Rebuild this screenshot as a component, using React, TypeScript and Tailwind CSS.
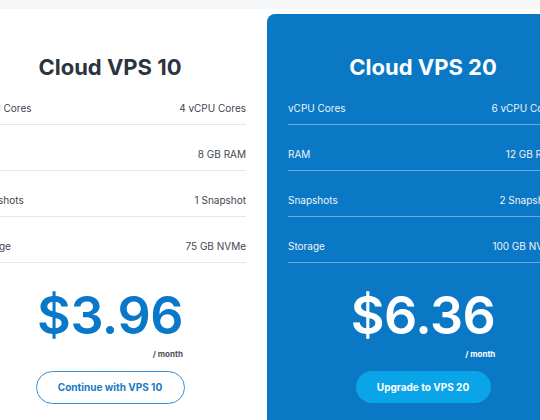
import React from "react";

type Row = { label: string; value: string };

function Card({
  title,
  rows,
  price,
  button,
  featured,
}: {
  title: string;
  rows: Row[];
  price: string;
  button: string;
  featured?: boolean;
}) {
  return (
    <div
      className={
        featured
          ? "w-[312px] shrink-0 mt-[5px] rounded-tl-[8px] bg-[#0a78c4] text-white px-[21px] pt-[39px] pb-[20px]"
          : "w-[312px] shrink-0 bg-white text-[#2f3542] px-[20px] pt-[44px] pb-[20px]"
      }
    >
      <div
        className={
          "text-center text-[22px] leading-[28px] font-bold -mb-[2px] " +
          (featured ? "text-white" : "text-[#2b3440]")
        }
      >
        {title}
      </div>
      <div>
        {rows.map((r) => (
          <div
            key={r.label}
            className={
              "flex justify-between items-center pt-[22px] pb-[8px] text-[10px] leading-[15px] border-b " +
              (featured
                ? "border-[#6aa9dc] text-[#eef5fb]"
                : "border-[#e6e8eb] text-[#3f4550]")
            }
          >
            <span>{r.label}</span>
            <span>{r.value}</span>
          </div>
        ))}
      </div>
      <div className="flex justify-center mt-[23px]">
        <div className="flex flex-col items-end">
          <div
            className={
              "text-[52px] leading-[60px] font-semibold tracking-[-0.5px] " +
              (featured ? "text-white" : "text-[#0a78c8]")
            }
          >
            {price}
          </div>
          <div
            className={
              "text-[8px] leading-[10px] font-bold mt-[3px] " +
              (featured ? "text-white" : "text-[#4a4f57]")
            }
          >
            / month
          </div>
        </div>
      </div>
      <div className="flex justify-center mt-[12px]">
        {featured ? (
          <button className="h-[32px] w-[135px] rounded-full bg-[#0aa4e8] text-white text-[10px] font-bold">
            {button}
          </button>
        ) : (
          <button className="h-[33px] w-[149px] rounded-full border-[1.5px] border-[#3a8fd3] bg-white text-[#1a7ac4] text-[10px] font-bold">
            {button}
          </button>
        )}
      </div>
    </div>
  );
}

export default function App() {
  return (
    <div
      className="w-[540px] h-[420px] overflow-hidden bg-[#f6f7f9]"
      style={{ fontFamily: "Inter, 'Noto Sans', sans-serif" }}
    >
      <div className="mt-[9px] bg-white h-[420px] flex gap-[1px] ml-[-46px] w-[700px] items-start">
        <Card
          title="Cloud VPS 10"
          rows={[
            { label: "vCPU Cores", value: "4 vCPU Cores" },
            { label: "RAM", value: "8 GB RAM" },
            { label: "Snapshots", value: "1 Snapshot" },
            { label: "Storage", value: "75 GB NVMe" },
          ]}
          price="$3.96"
          button="Continue with VPS 10"
        />
        <Card
          title="Cloud VPS 20"
          rows={[
            { label: "vCPU Cores", value: "6 vCPU Cores" },
            { label: "RAM", value: "12 GB RAM" },
            { label: "Snapshots", value: "2 Snapshots" },
            { label: "Storage", value: "100 GB NVMe" },
          ]}
          price="$6.36"
          button="Upgrade to VPS 20"
          featured
        />
      </div>
    </div>
  );
}
